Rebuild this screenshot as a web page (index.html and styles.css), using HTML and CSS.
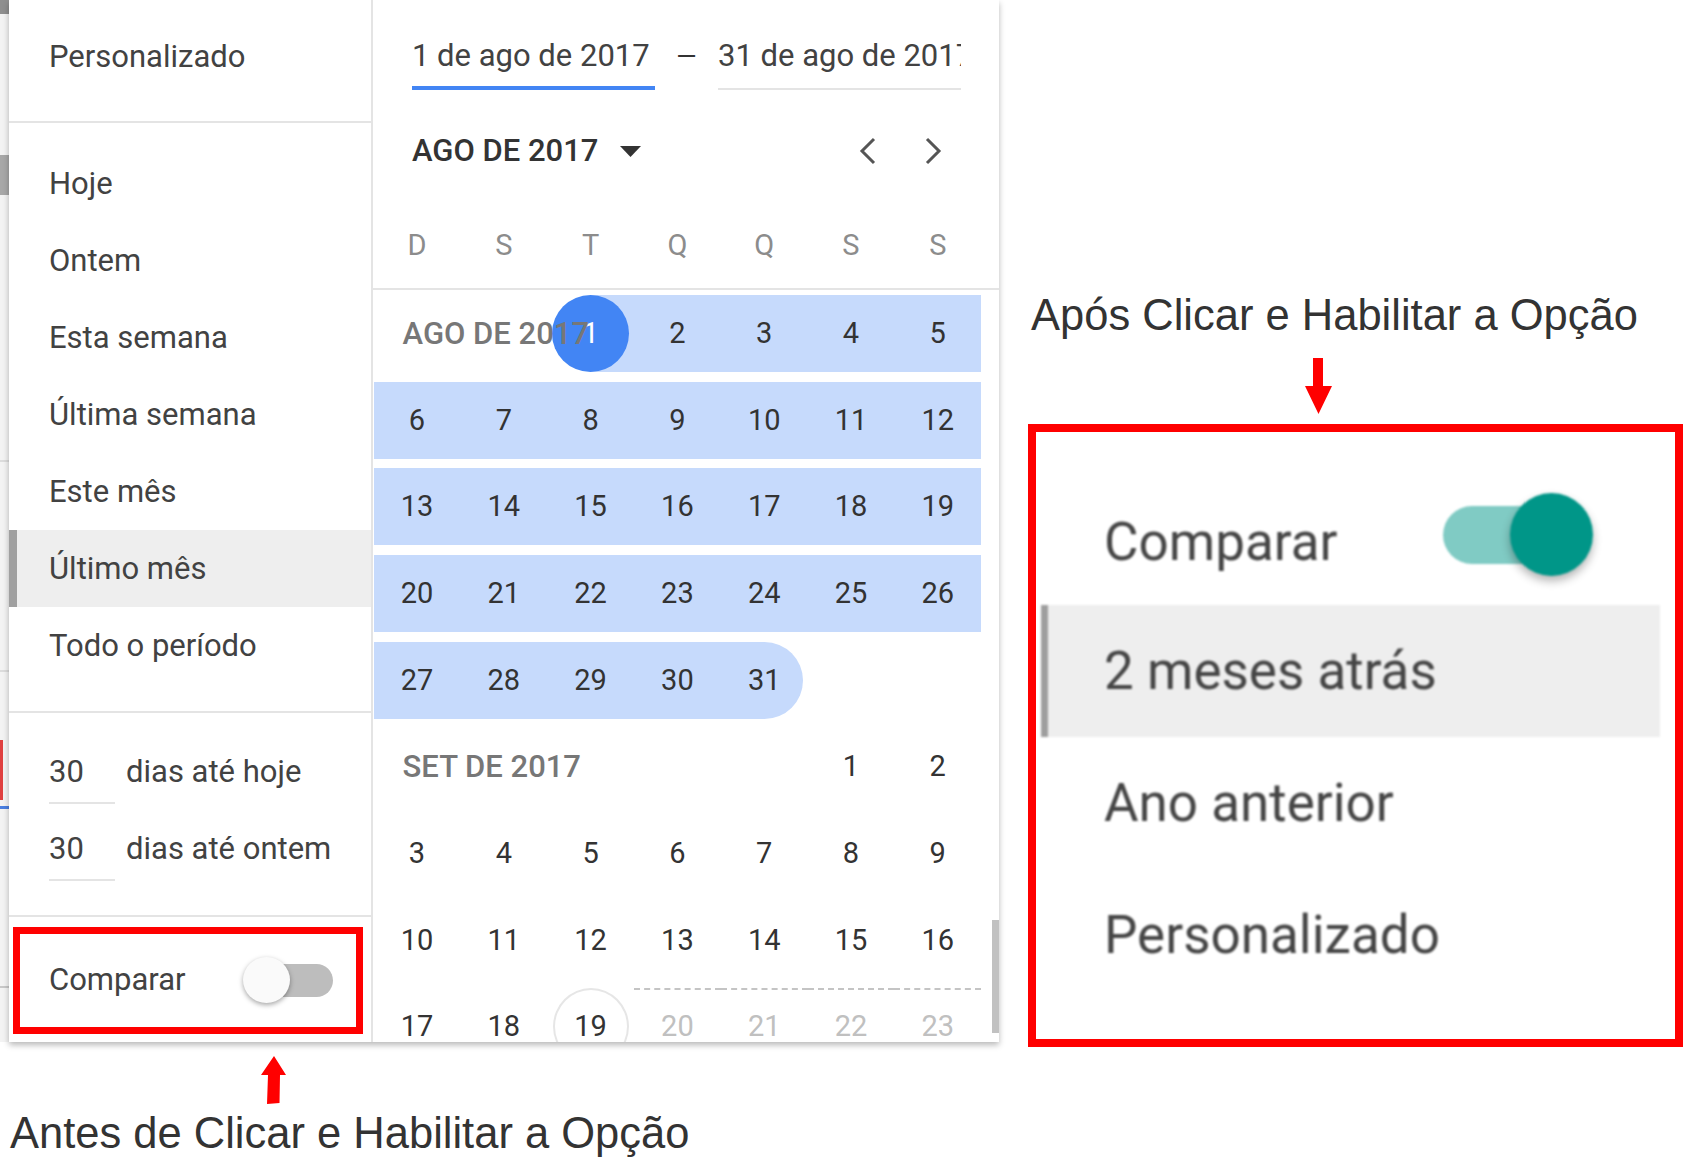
FILE: index.html
```html
<!DOCTYPE html>
<html lang="pt-BR">
<head>
<meta charset="utf-8">
<title>Comparar período</title>
<link rel="stylesheet" href="styles.css">
</head>
<body>
<div class="page">
  <section class="before">
    <div class="stage">
      <div class="backdrop"></div>
      <div class="picker">
        <aside class="presets">
          <div class="group group-custom">
            <div class="preset">Personalizado</div>
          </div>
          <div class="group group-list">
            <div class="preset">Hoje</div>
            <div class="preset">Ontem</div>
            <div class="preset">Esta semana</div>
            <div class="preset">Última semana</div>
            <div class="preset">Este mês</div>
            <div class="preset active">Último mês</div>
            <div class="preset">Todo o período</div>
          </div>
          <div class="group group-rolling">
            <div class="rolling-row"><span class="num-input">30</span><span>dias até hoje</span></div>
            <div class="rolling-row"><span class="num-input">30</span><span>dias até ontem</span></div>
          </div>
          <div class="compare-row">
            <span>Comparar</span>
            <span class="switch off"><span class="track"></span><span class="knob"></span></span>
          </div>
          <div class="callout-left"></div>
        </aside>

        <div class="calendar">
          <div class="range">
            <div class="field active">1 de ago de 2017</div>
            <div class="dash">—</div>
            <div class="field idle">31 de ago de 2017</div>
          </div>
          <div class="month-head">
            <span class="month-title">AGO DE 2017</span>
            <svg class="caret" viewBox="0 0 21 11" width="21" height="11"><polygon points="0,0 21,0 10.5,11" fill="#333"/></svg>
            <div class="nav">
              <span class="nav-btn"><svg viewBox="0 0 19 28" width="19" height="28"><path d="M16 2 L4 14 L16 26" fill="none" stroke="#555" stroke-width="3"/></svg></span>
              <span class="nav-btn"><svg viewBox="0 0 19 28" width="19" height="28"><path d="M3 2 L15 14 L3 26" fill="none" stroke="#555" stroke-width="3"/></svg></span>
            </div>
          </div>
          <div class="weekdays">
            <span>D</span><span>S</span><span>T</span><span>Q</span><span>Q</span><span>S</span><span>S</span>
          </div>
          <div class="months">
            <div class="grid">
              <span class="label">AGO DE 2017</span>
              <span class="d start"><span class="dot">1</span></span>
              <span class="d in">2</span><span class="d in">3</span><span class="d in">4</span><span class="d in">5</span>

              <span class="d in">6</span><span class="d in">7</span><span class="d in">8</span><span class="d in">9</span><span class="d in">10</span><span class="d in">11</span><span class="d in">12</span>

              <span class="d in">13</span><span class="d in">14</span><span class="d in">15</span><span class="d in">16</span><span class="d in">17</span><span class="d in">18</span><span class="d in">19</span>

              <span class="d in">20</span><span class="d in">21</span><span class="d in">22</span><span class="d in">23</span><span class="d in">24</span><span class="d in">25</span><span class="d in">26</span>

              <span class="d in">27</span><span class="d in">28</span><span class="d in">29</span><span class="d in">30</span><span class="d end">31</span><span class="d"></span><span class="d"></span>

              <span class="label wide">SET DE 2017</span>
              <span class="d">1</span><span class="d">2</span>

              <span class="d">3</span><span class="d">4</span><span class="d">5</span><span class="d">6</span><span class="d">7</span><span class="d">8</span><span class="d">9</span>

              <span class="d">10</span><span class="d">11</span><span class="d">12</span><span class="d">13</span><span class="d">14</span><span class="d">15</span><span class="d">16</span>

              <span class="d">17</span><span class="d">18</span><span class="d today"><span class="ring">19</span></span><span class="d future">20</span><span class="d future">21</span><span class="d future">22</span><span class="d future">23</span>
            </div>
            <div class="scrollbar"></div>
          </div>
        </div>
      </div>
    </div>
    <svg class="arrow-up" viewBox="0 0 26 48" width="26" height="48"><polygon points="13,0 25,19 19,19 18.5,47 6,48 7,19 0,19" fill="#f00"/></svg>
    <p class="caption">Antes de Clicar e Habilitar a Opção</p>
  </section>

  <section class="after">
    <p class="caption">Após Clicar e Habilitar a Opção</p>
    <svg class="arrow-down" viewBox="0 0 27 56" width="27" height="56"><polygon points="8,0 18,0 18,28 27,28 13.5,56 0,28 8,28" fill="#f00"/></svg>
    <div class="callout-box">
      <div class="zpanel">
        <div class="z-compare">
          <span class="z-label">Comparar</span>
          <span class="switch on"><span class="track"></span><span class="knob"></span></span>
        </div>
        <div class="z-item active">2 meses atrás</div>
        <div class="z-item">Ano anterior</div>
        <div class="z-item">Personalizado</div>
      </div>
    </div>
  </section>
</div>
</body>
</html>
```

FILE: styles.css
```css
* { box-sizing: border-box; }
html, body { margin: 0; padding: 0; }
body {
  width: 1684px;
  height: 1158px;
  overflow: hidden;
  background: #fff;
  font-family: Roboto, "Noto Sans", sans-serif;
  color: #3d3d3d;
}
.page { display: flex; height: 1158px; }

/* ---------- left: before ---------- */
.before { width: 1000px; flex-shrink: 0; display: flex; flex-direction: column; }
.stage { display: flex; height: 1042px; }
.backdrop {
  width: 9px;
  flex-shrink: 0;
  background:
    linear-gradient(#8f8f8f, #8f8f8f) 0 0 / 9px 14px no-repeat,
    linear-gradient(#a8a8a8, #a8a8a8) 0 155px / 9px 40px no-repeat,
    linear-gradient(#dcdcdc, #dcdcdc) 0 460px / 9px 2px no-repeat,
    linear-gradient(#dcdcdc, #dcdcdc) 0 670px / 9px 2px no-repeat,
    linear-gradient(#e04040, #e04040) 0 740px / 3px 60px no-repeat,
    linear-gradient(#4a7fe0, #4a7fe0) 0 806px / 9px 3px no-repeat,
    linear-gradient(#c8c8c8, #c8c8c8) 0 986px / 9px 2px no-repeat,
    #f3f3f3;
}
.picker {
  width: 990px;
  display: flex;
  background: #fff;
  box-shadow: 0 3px 6px rgba(0, 0, 0, .28);
  position: relative;
  z-index: 1;
}

.presets {
  width: 364px;
  flex-shrink: 0;
  border-right: 2px solid #e4e4e4;
  position: relative;
  display: flex;
  flex-direction: column;
  font-size: 31px;
  color: #424242;
}
.group { border-bottom: 2px solid #e4e4e4; }
.group-custom { padding: 18px 0 26px; }
.group-list { padding: 22px 0 27px; }
.group-rolling {
  padding: 39px 0 34px 40px;
  display: flex;
  flex-direction: column;
  gap: 25px;
}
.preset { height: 77px; line-height: 77px; padding-left: 40px; white-space: nowrap; }
.preset.active { background: #eee; border-left: 8px solid #a0a0a0; padding-left: 32px; }
.rolling-row { display: flex; align-items: baseline; line-height: 40px; white-space: nowrap; }
.num-input { width: 66px; padding-bottom: 10px; border-bottom: 2px solid #e4e4e4; margin-right: 11px; }
.compare-row {
  flex: 1;
  display: flex;
  align-items: center;
  justify-content: space-between;
  padding: 0 38px 0 40px;
  line-height: 40px;
}
.callout-left {
  position: absolute;
  left: 4px;
  top: 927px;
  width: 350px;
  height: 107px;
  border: 7px solid #f00;
}

/* switches */
.switch { position: relative; flex-shrink: 0; display: block; }
.switch .track { position: absolute; border-radius: 999px; }
.switch .knob { position: absolute; border-radius: 50%; }
.switch.off { width: 90px; height: 46px; }
.switch.off .track { left: 9px; top: 7px; width: 81px; height: 33px; background: #bdbdbd; }
.switch.off .knob { left: 0; top: 0; width: 47px; height: 46px; background: #fafafa; box-shadow: 0 2px 5px rgba(0, 0, 0, .35); }
.switch.on { width: 150px; height: 83px; margin-top: 61px; }
.switch.on .track { left: 0; top: 13px; width: 137px; height: 58px; background: #80cbc4; }
.switch.on .knob { left: 67px; top: 0; width: 83px; height: 83px; background: #009688; box-shadow: 0 5px 10px rgba(0, 0, 0, .3); }

/* calendar */
.calendar { flex: 1; min-width: 0; display: flex; flex-direction: column; position: relative; color: #333; }
.range {
  display: flex;
  align-items: flex-start;
  height: 90px;
  padding: 36px 0 0 39px;
  font-size: 31px;
  line-height: 40px;
}
.field { width: 243px; flex-shrink: 0; white-space: nowrap; overflow: hidden; color: #424242; }
.field.active { padding-bottom: 10px; border-bottom: 4px solid #4285f4; }
.field.idle { padding-bottom: 12px; border-bottom: 2px solid #e4e4e4; }
.dash { width: 63px; flex-shrink: 0; text-align: center; font-size: 26px; }

.month-head {
  display: flex;
  align-items: center;
  height: 40px;
  margin-top: 41px;
  padding: 0 46px 0 39px;
}
.month-title { font-size: 31px; font-weight: 500; line-height: 40px; color: #333; }
.caret { margin-left: 22px; display: block; }
.nav { margin-left: auto; display: flex; gap: 26px; }
.nav-btn { width: 40px; height: 40px; display: flex; align-items: center; justify-content: center; }

.weekdays {
  display: grid;
  grid-template-columns: repeat(7, 86.8px);
  padding-left: 0.6px;
  margin-top: 54px;
  padding-bottom: 23px;
  border-bottom: 2px solid #e4e4e4;
  font-size: 29px;
  line-height: 40px;
  color: #8c8c8c;
  text-align: center;
}

.months { flex: 1; overflow: hidden; position: relative; }
.grid {
  display: grid;
  grid-template-columns: repeat(7, 86.8px);
  grid-auto-rows: 86.7px;
  align-items: center;
  padding-left: 0.6px;
  font-size: 29px;
  color: #333;
}
.d { display: block; height: 77px; line-height: 77px; text-align: center; }
.in { background: #c6dafc; }
.start { background: linear-gradient(90deg, transparent 50%, #c6dafc 50%); }
.dot {
  display: block;
  width: 77px;
  height: 77px;
  margin: 0 auto;
  border-radius: 50%;
  background: #4285f4;
  color: #fff;
}
.end {
  background: #c6dafc;
  border-radius: 0 38.5px 38.5px 0;
  margin-right: 5px;
  padding-left: 5px;
}
.label {
  grid-column: span 2;
  height: 77px;
  line-height: 77px;
  padding-left: 29px;
  white-space: nowrap;
  font-size: 31px;
  font-weight: 500;
  color: #777;
  position: relative;
  z-index: 2;
}
.label.wide { grid-column: span 5; }
.ring {
  display: block;
  width: 76px;
  height: 77px;
  margin: 0 auto;
  border-radius: 50%;
  border: 2px solid #e6e6e6;
  line-height: 73px;
}
.future { color: #c0c0c0; border-top: 2px dashed #c4c4c4; line-height: 73px; }
.scrollbar { position: absolute; right: 0; top: 630px; width: 7px; height: 113px; background: #c1c1c1; }

/* captions and arrows */
.caption {
  margin: 0;
  font-family: "Liberation Sans", Arial, sans-serif;
  font-size: 43.5px;
  line-height: 48px;
  color: #333;
  white-space: nowrap;
}
.before .caption { padding-left: 10px; margin-top: 5px; }
.arrow-up { display: block; margin: 14px 0 0 261px; }

/* ---------- right: after ---------- */
.after { flex: 1; padding-top: 291px; }
.after .caption { padding-left: 31px; }
.arrow-down { display: block; margin: 19px 0 0 305px; }
.callout-box {
  margin: 10px 0 0 28px;
  width: 655px;
  height: 623px;
  border: 8px solid #f00;
}
.zpanel {
  margin-left: 5px;
  width: 619px;
  font-size: 53px;
  color: #454545;
  filter: blur(0.8px);
}
.z-compare {
  height: 173px;
  display: flex;
  justify-content: space-between;
  align-items: flex-start;
  padding: 0 67px 0 63px;
}
.z-label { margin-top: 78px; line-height: 64px; }
.z-item { height: 132px; line-height: 132px; padding-left: 63px; white-space: nowrap; }
.z-item.active { background: #eee; border-left: 7px solid #9e9e9e; padding-left: 56px; }
```
